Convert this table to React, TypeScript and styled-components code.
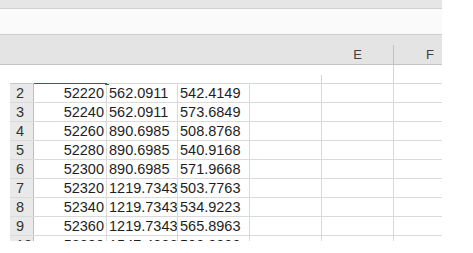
import React from "react";
import styled, { createGlobalStyle } from "styled-components";

const Global = createGlobalStyle`
  html, body { margin: 0; padding: 0; background: #ffffff; }
  body { font-family: "Liberation Sans", Arial, sans-serif; }
`;

const Sheet = styled.div`
  width: 442px;
  display: flex;
  flex-direction: column;
  overflow: hidden;
`;

const TopStrip = styled.div`
  height: 8px;
  background: #e6e6e6;
  border-bottom: 1px solid #d2d2d2;
`;

const FormulaBar = styled.div`
  height: 25px;
  background: #fafafa;
  border-bottom: 1px solid #cdcdcd;
`;

const ColumnHeader = styled.div`
  height: 29px;
  background: #e4e4e4;
  border-bottom: 1px solid #c4c4c4;
  display: flex;
  align-items: stretch;
  overflow: hidden;
`;

const HeaderCell = styled.div<{ $w: number }>`
  width: ${(p) => p.$w}px;
  flex-shrink: 0;
  display: flex;
  align-items: flex-end;
  justify-content: center;
  padding-bottom: 3px;
  font-size: 13px;
  line-height: 13px;
  color: #404040;
`;

const VLine = styled.div<{ $top?: number; $color?: string }>`
  width: 1px;
  flex-shrink: 0;
  margin-top: ${(p) => p.$top ?? 0}px;
  background: ${(p) => p.$color ?? "#d4d4d4"};
`;

const Gap = styled.div`
  height: 18px;
  display: flex;
  align-items: stretch;
`;

const Space = styled.div<{ $w?: number }>`
  ${(p) => (p.$w ? `width: ${p.$w}px; flex-shrink: 0;` : "flex: 1;")}
`;

const Grid = styled.div`
  height: 158px;
  overflow: hidden;
  display: flex;
  flex-direction: column;
`;

const Edge = styled.div`
  height: 1px;
  flex-shrink: 0;
  display: flex;
  margin-left: 10px;
`;

const EdgeSeg = styled.div<{ $w?: number; $color: string }>`
  ${(p) => (p.$w ? `width: ${p.$w}px;` : "flex: 1;")}
  background: ${(p) => p.$color};
  position: relative;
`;

const FillHandle = styled.div`
  position: absolute;
  right: -2px;
  top: -2px;
  width: 4px;
  height: 4px;
  background: #217346;
`;

const Row = styled.div`
  display: flex;
  height: 18px;
  border-bottom: 1px solid #dadada;
  margin-left: 10px;
  flex-shrink: 0;
`;

const RowHead = styled.div`
  width: 17px;
  padding-left: 6px;
  background: #e9e9e9;
  border-right: 1px solid #bdbdbd;
  font-size: 14.5px;
  line-height: 18px;
  color: #333333;
`;

const CellBox = styled.div<{ $w?: number }>`
  ${(p) => (p.$w ? `width: ${p.$w - 1}px;` : "flex: 1;")}
  ${(p) => (p.$w ? "border-right: 1px solid #dadada;" : "")}
  display: flex;
`;

const Text = styled.span<{ $align?: "left" | "right" }>`
  flex: 1;
  padding: ${(p) => (p.$align === "right" ? "0 2px 0 0" : "0 0 0 2px")};
  text-align: ${(p) => p.$align ?? "left"};
  font-size: 14.5px;
  line-height: 18px;
  color: #1e1e1e;
  white-space: nowrap;
  overflow: hidden;
`;

const rows: [number, string, string, string][] = [
  [2, "52220", "562.0911", "542.4149"],
  [3, "52240", "562.0911", "573.6849"],
  [4, "52260", "890.6985", "508.8768"],
  [5, "52280", "890.6985", "540.9168"],
  [6, "52300", "890.6985", "571.9668"],
  [7, "52320", "1219.7343", "503.7763"],
  [8, "52340", "1219.7343", "534.9223"],
  [9, "52360", "1219.7343", "565.8963"],
  [10, "52380", "1547.4096", "500.0000"],
];

export default function App() {
  return (
    <>
      <Global />
      <Sheet>
        <TopStrip />
        <FormulaBar />
        <ColumnHeader>
          <Space $w={322} />
          <HeaderCell $w={71}>E</HeaderCell>
          <VLine $top={10} $color="#c2c2c2" />
          <HeaderCell $w={72}>F</HeaderCell>
        </ColumnHeader>
        <Gap>
          <Space $w={321} />
          <VLine $top={10} />
          <Space $w={71} />
          <VLine />
          <Space />
        </Gap>
        <Grid>
          <Edge>
            <EdgeSeg $w={24} $color="#c8c8c8" />
            <EdgeSeg $w={73} $color="#217346">
              <FillHandle />
            </EdgeSeg>
            <EdgeSeg $color="#d8d8d8" />
          </Edge>
          {rows.map(([n, a, b, c]) => (
            <Row key={n}>
              <RowHead>{n}</RowHead>
              <CellBox $w={73}>
                <Text $align="right">{a}</Text>
              </CellBox>
              <CellBox $w={71}>
                <Text>{b}</Text>
              </CellBox>
              <CellBox $w={72}>
                <Text>{c}</Text>
              </CellBox>
              <CellBox $w={72} />
              <CellBox $w={72} />
              <CellBox />
            </Row>
          ))}
        </Grid>
      </Sheet>
    </>
  );
}
